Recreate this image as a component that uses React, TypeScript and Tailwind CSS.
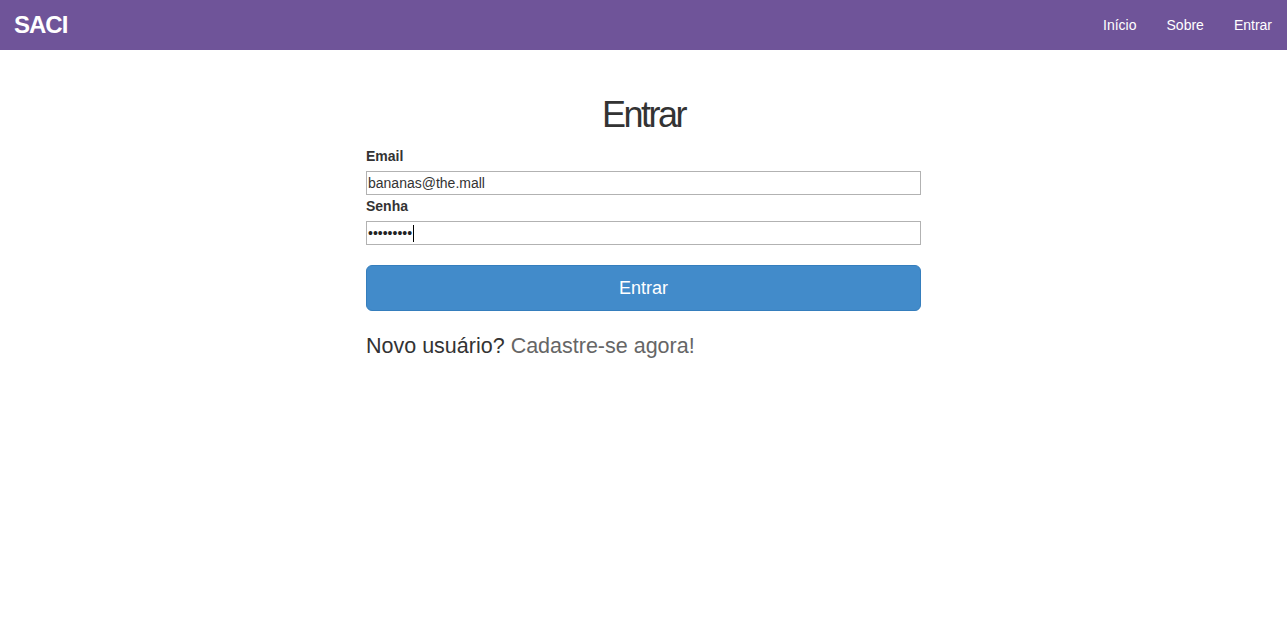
const NAV = ["Início", "Sobre", "Entrar"];

export default function App() {
  return (
    <div className="min-h-screen bg-white font-['Liberation_Sans',Arial,sans-serif] text-[#333]">
      <header className="flex h-[50px] items-center justify-between bg-[#6f5499]">
        <a href="#" className="pl-[14px] text-[24px] font-bold leading-[50px] tracking-[-1px] text-white">
          SACI
        </a>
        <nav className="flex">
          {NAV.map((l) => (
            <a key={l} href="#" className="px-[15px] py-[15px] text-[14px] leading-[20px] text-white">
              {l}
            </a>
          ))}
        </nav>
      </header>

      <main className="mx-auto w-[555px] pt-[45px]">
        <h1 className="text-center text-[36px] leading-[40px] tracking-[-2.5px] text-[#333]">Entrar</h1>

        <form className="mt-[11px]" onSubmit={(e) => e.preventDefault()}>
          <label className="mb-[5px] block text-[14px] font-bold leading-[20px]">Email</label>
          <input
            type="email"
            defaultValue="bananas@the.mall"
            className="block h-[24px] w-full border border-[#b2b2b2] px-[1px] text-[14px] text-[#333] outline-none"
          />
          <label className="mb-[5px] mt-px block text-[14px] font-bold leading-[20px]">Senha</label>
          <div className="flex h-[24px] w-full items-center border border-[#b2b2b2] px-[1px] text-[14px] text-[#222]">
            <span>•••••••••</span>
            <span className="ml-px h-[17px] w-px bg-black" />
          </div>

          <button
            type="submit"
            className="mt-[20px] block h-[46px] w-full rounded-[6px] border border-[#357ebd] bg-[#428bca] text-[18px] text-white"
          >
            Entrar
          </button>
        </form>

        <p className="mt-[21px] text-[21.5px] leading-[28px] text-[#333]">
          Novo usuário? <a href="#" className="text-[#666]">Cadastre-se agora!</a>
        </p>
      </main>
    </div>
  );
}
